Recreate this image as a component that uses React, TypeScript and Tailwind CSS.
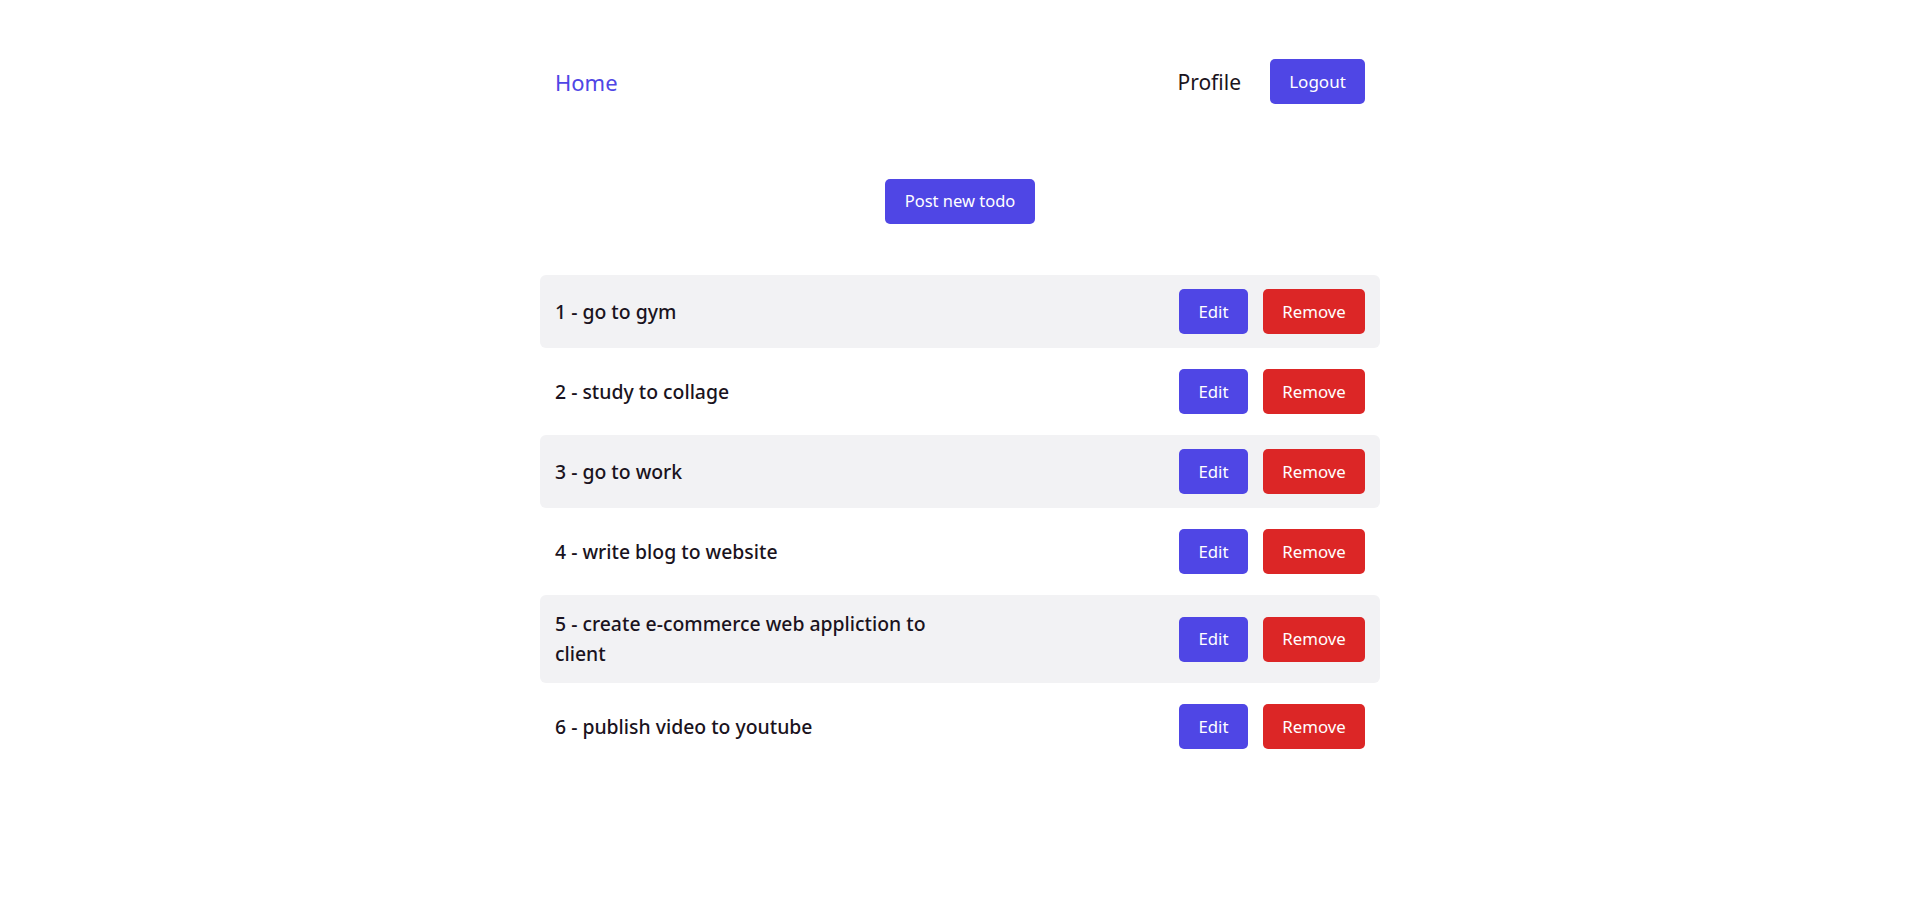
import React from "react";

const todos = [
  "go to gym",
  "study to collage",
  "go to work",
  "write blog to website",
  "create e-commerce web appliction to client",
  "publish video to youtube",
];

export default function App() {
  return (
    <div
      className="min-h-screen bg-white text-[#1a1320]"
      style={{ fontFamily: '"Noto Sans", "Open Sans", Arial, sans-serif' }}
    >
      <div className="mx-auto w-[840px] pt-[59px]">
        <nav className="flex items-center justify-between px-[15px]">
          <a className="text-[22px] text-[#4f46e5] leading-[30px]">Home</a>
          <div className="flex items-center gap-[29px]">
            <a className="text-[21px] leading-[30px] text-[#1a1320]">Profile</a>
            <button className="h-[45px] w-[95px] rounded-[5px] bg-[#4f46e5] text-[17px] text-white">
              Logout
            </button>
          </div>
        </nav>

        <div className="mt-[75px] flex justify-center">
          <button className="h-[45px] rounded-[5px] bg-[#4f46e5] px-[20px] text-[16.5px] text-white">
            Post new todo
          </button>
        </div>

        <ul className="mt-[51px] flex flex-col gap-[7px]">
          {todos.map((t, i) => (
            <li
              key={i}
              className={
                "flex items-center justify-between rounded-[6px] px-[15px] py-[14px] " +
                (i % 2 === 0 ? "bg-[#f2f2f4]" : "bg-white")
              }
            >
              <span className="w-[400px] text-[19.4px] leading-[30px] font-medium">
                {`${i + 1} - ${t}`}
              </span>
              <div className="flex items-center gap-[15px]">
                <button className="h-[45px] w-[69px] rounded-[5px] bg-[#4f46e5] text-[16.8px] text-white">
                  Edit
                </button>
                <button className="h-[45px] w-[102px] rounded-[5px] bg-[#dc2626] text-[16.8px] text-white">
                  Remove
                </button>
              </div>
            </li>
          ))}
        </ul>
      </div>
    </div>
  );
}
